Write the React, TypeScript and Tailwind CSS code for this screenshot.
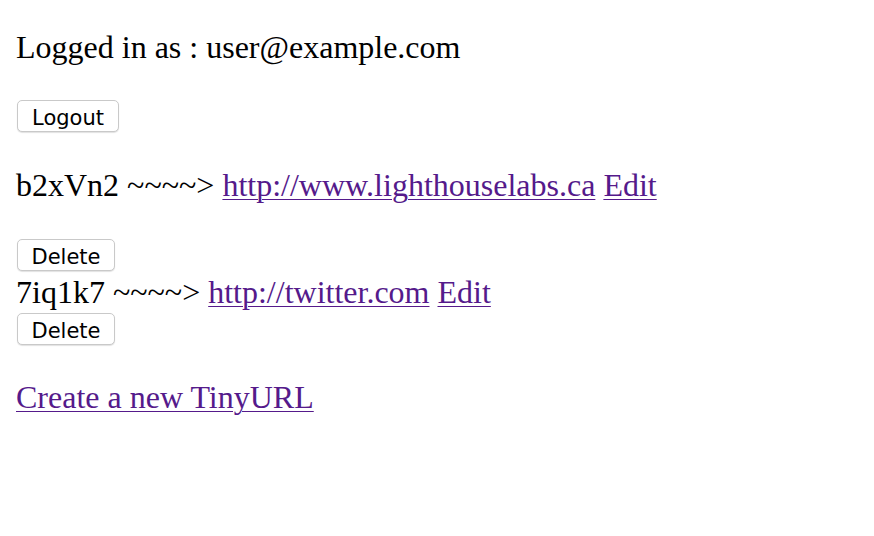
import React from "react";

const serif = "font-['Liberation_Serif','Times_New_Roman',serif]";
const btn =
  "flex items-center justify-center h-[32px] pt-[5px] rounded-[5px] border border-[#c9c9c9] bg-white shadow-[0_1px_1px_rgba(0,0,0,0.12)] text-[21px] leading-none text-black font-['DejaVu_Sans',sans-serif]";
const link = "text-[#551a8b] underline underline-offset-[3px] decoration-[1px]";

export default function App() {
  return (
    <div className={`min-h-[536px] w-full bg-white px-4 text-black ${serif}`}>
      <div className="flex flex-col items-start text-[32px] leading-[36px]">
        <p className="mt-[29px] h-[36px] whitespace-nowrap">Logged in as : user@example.com</p>
        <button className={`${btn} mt-[35px] ml-px w-[102px]`}>Logout</button>
        <p className="mt-[35px] h-[36px] whitespace-nowrap">
          b2xVn2 ~~~~&gt; <a className={link} href="#">http://www.lighthouselabs.ca</a>{" "}
          <a className={link} href="#">Edit</a>
        </p>
        <button className={`${btn} mt-[36px] ml-px w-[98px]`}>Delete</button>
        <p className="mt-[3px] h-[36px] whitespace-nowrap">
          7iq1k7 ~~~~&gt; <a className={link} href="#">http://twitter.com</a>{" "}
          <a className={link} href="#">Edit</a>
        </p>
        <button className={`${btn} mt-[3px] ml-px w-[98px]`}>Delete</button>
        <p className="mt-[34px] h-[36px] whitespace-nowrap">
          <a className={link} href="#">Create a new TinyURL</a>
        </p>
      </div>
    </div>
  );
}
